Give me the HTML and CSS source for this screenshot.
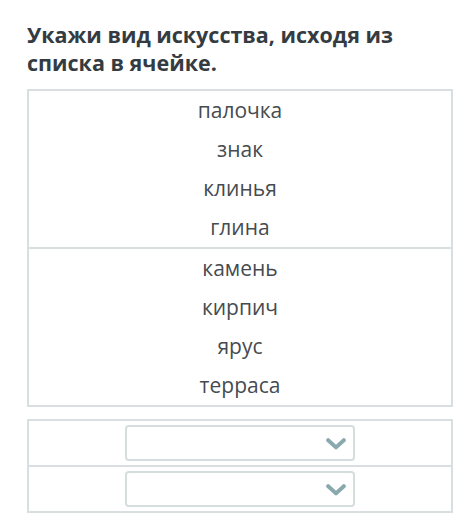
FILE: index.html
```html
<!DOCTYPE html>
<html lang="ru">
<head>
<meta charset="utf-8">
<title>Укажи вид искусства</title>
<link rel="stylesheet" href="styles.css">
</head>
<body>
<div class="page">
  <h1 class="title">Укажи вид искусства, исходя из списка в ячейке.</h1>
  <div class="table list">
    <div class="row">
      <div class="item">палочка</div>
      <div class="item">знак</div>
      <div class="item">клинья</div>
      <div class="item">глина</div>
    </div>
    <div class="row">
      <div class="item">камень</div>
      <div class="item">кирпич</div>
      <div class="item">ярус</div>
      <div class="item">терраса</div>
    </div>
  </div>
  <div class="table answers">
    <div class="row sel-row">
      <div class="select">
        <svg class="chev" width="20" height="12" viewBox="0 0 20 12"><path d="M2.2 2.2 L10 9.4 L17.8 2.2" fill="none" stroke="#8aa9ae" stroke-width="4" stroke-linecap="round" stroke-linejoin="round"/></svg>
      </div>
    </div>
    <div class="row sel-row">
      <div class="select">
        <svg class="chev" width="20" height="12" viewBox="0 0 20 12"><path d="M2.2 2.2 L10 9.4 L17.8 2.2" fill="none" stroke="#8aa9ae" stroke-width="4" stroke-linecap="round" stroke-linejoin="round"/></svg>
      </div>
    </div>
  </div>
</div>
</body>
</html>
```

FILE: styles.css
```css
html, body {
  margin: 0;
  padding: 0;
  background: #ffffff;
}

.page {
  padding: 21px 22px 0 27px;
  font-family: "Open Sans", "Liberation Sans", sans-serif;
}

.title {
  margin: 0;
  width: 410px;
  font-size: 21.5px;
  line-height: 28px;
  font-weight: 700;
  color: #343c42;
}

.table {
  width: 426px;
  box-sizing: border-box;
  border: 2px solid #d9dfe0;
}

.list {
  margin-top: 12px;
}

.answers {
  margin-top: 12px;
}

.row + .row {
  border-top: 2px solid #d9dfe0;
}

.item {
  text-align: center;
  font-size: 21px;
  line-height: 39px;
  color: #454b50;
}

.sel-row {
  display: flex;
  justify-content: center;
  padding: 4px 0;
}

.select {
  width: 230px;
  height: 36px;
  box-sizing: border-box;
  border: 2px solid #d6dddf;
  border-radius: 4px;
  display: flex;
  align-items: center;
  justify-content: flex-end;
  padding-right: 7px;
}

.chev {
  display: block;
  margin-top: 1px;
}
```
